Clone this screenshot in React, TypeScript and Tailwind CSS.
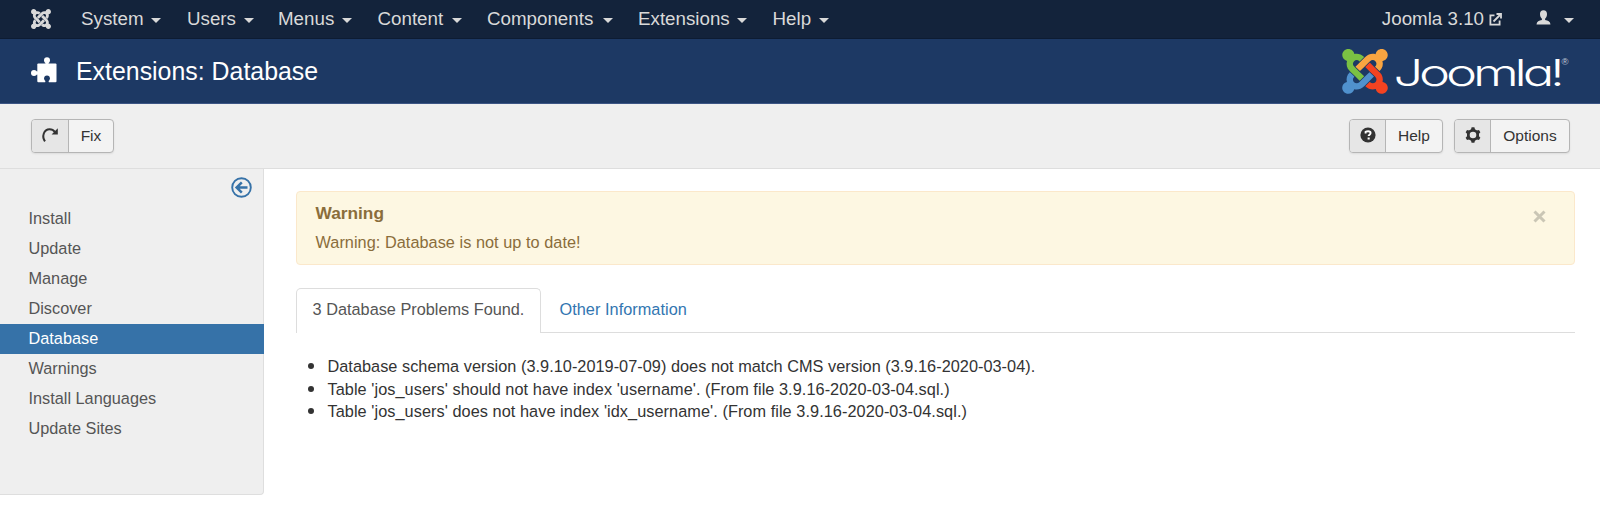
import type { ReactNode } from 'react';
import { SiJoomla } from 'react-icons/si';

const menus = [
  { label: 'System', width: 'w-[106px]', inner: 'w-[80px]' },
  { label: 'Users', width: 'w-[91px]', inner: 'w-[67px]' },
  { label: 'Menus', width: 'w-[99.5px]', inner: 'w-[74px]' },
  { label: 'Content', width: 'w-[109.5px]', inner: 'w-[84.5px]' },
  { label: 'Components', width: 'w-[151px]', inner: 'w-[126px]' },
  { label: 'Extensions', width: 'w-[134.5px]', inner: 'w-[109px]' },
  { label: 'Help', width: 'w-[80px]', inner: 'w-[56px]' },
];

const sidebar = ['Install', 'Update', 'Manage', 'Discover', 'Database', 'Warnings', 'Install Languages', 'Update Sites'];

const problems = [
  { text: 'Database schema version (3.9.10-2019-07-09) does not match CMS version (3.9.16-2020-03-04).', spacing: 'tracking-[0.03px]' },
  { text: "Table 'jos_users' should not have index 'username'. (From file 3.9.16-2020-03-04.sql.)", spacing: 'tracking-[0.06px]' },
  { text: "Table 'jos_users' does not have index 'idx_username'. (From file 3.9.16-2020-03-04.sql.)", spacing: 'tracking-[0.06px]' },
];

function Caret() {
  return (
    <svg className="mt-[2px] shrink-0" width="10" height="5" viewBox="0 0 10 5">
      <path d="M0 0h10L5 5z" fill="#d9d9d9" />
    </svg>
  );
}

function PuzzleIcon() {
  return (
    <svg width="26" height="26" viewBox="0 0 26 26" fill="#fff">
      <rect x="6.300" y="6.400" width="19.200" height="18.800" rx="1" />
      <circle cx="16" cy="3.200" r="3" />
      <path d="M14.400 4h3.200v3h-3.200z" />
      <circle cx="3" cy="16" r="3" />
      <path d="M3 14.400h4v3.200H3z" />
      <g fill="#1d3964">
        <circle cx="16" cy="21.300" r="2.900" />
        <path d="M14.700 22h2.600l.6 4h-3.800z" />
      </g>
    </svg>
  );
}

function JoomlaLogo() {
  return (
    <svg width="232" height="54" viewBox="0 0 232 54">
      <g transform="translate(4.2 5) scale(1.9 1.87)">
        <path fill="#5091cd" d="M16.719 14.759L14.22 17.26l-2.37 2.37-.462.466c-1.368 1.365-3.297 1.83-5.047 1.397-.327 1.424-1.604 2.49-3.13 2.49C1.438 23.983 0 22.547 0 20.772c0-1.518 1.055-2.789 2.469-3.123-.446-1.76.016-3.705 1.396-5.08l.179-.18 2.37 2.37-.184.181c-.769.779-.769 2.024 0 2.789.771.78 2.022.78 2.787 0l.465-.465 2.367-2.371 2.502-2.506 2.368 2.372z" />
        <path fill="#f44321" d="M17.643 21.411c-1.822.563-3.885.12-5.328-1.318l-.18-.185 2.365-2.369.18.184c.771.768 2.018.768 2.787 0 .765-.765.769-2.01-.004-2.781l-.466-.465-2.365-2.37-2.502-2.503 2.37-2.369 2.499 2.505 2.367 2.37.464.464c1.365 1.36 1.846 3.278 1.411 5.021 1.56.224 2.759 1.56 2.759 3.18 0 1.784-1.439 3.21-3.209 3.21-1.545 0-2.851-1.096-3.135-2.565l-.013-.009z" />
        <path fill="#f9a541" d="M6.975 9.461l2.508-2.505 2.37-2.369.462-.461C13.74 2.7 15.772 2.251 17.58 2.79c.212-1.561 1.555-2.775 3.179-2.775 1.772 0 3.211 1.437 3.211 3.209 0 1.631-1.216 2.978-2.79 3.186.519 1.799.068 3.816-1.35 5.234l-.182.184-2.369-2.369.184-.184c.769-.77.769-2.016 0-2.783-.766-.766-2.011-.768-2.781.003l-.462.461-2.37 2.369-2.505 2.502-2.37-2.366z" />
        <path fill="#7ac143" d="M4.322 12.108l-.461-.462C2.43 10.215 1.986 8.17 2.529 6.358 1.1 6.029.03 4.754.03 3.224.03 1.454 1.47.015 3.24.015c1.596 0 2.92 1.166 3.17 2.691 1.73-.405 3.626.065 4.979 1.415l.184.185-2.37 2.37-.183-.181c-.77-.765-2.016-.765-2.785 0-.771.781-.77 2.025-.005 2.79l.465.466 2.37 2.37 2.505 2.505-2.367 2.37-2.51-2.505-2.371-2.37v-.012z" />
      </g>
      <text
        transform="translate(55.500 41.500) scale(1.42 1)"
        fill="#fff"
        className="font-['Inter',sans-serif] text-[37px] font-light tracking-[-2.95px] [font-feature-settings:'cv11']"
      >
        Joomla!
      </text>
      <text x="223.500" y="20.500" fill="#c3cbd8" className="font-['Liberation_Sans',sans-serif] text-[9.5px]">®</text>
    </svg>
  );
}

function ToolbarButton({ icon, label, width, iconWidth }: { icon: ReactNode; label: string; width: string; iconWidth: string }) {
  return (
    <button className={`flex h-[34px] ${width} overflow-hidden rounded-[4px] border border-[#b5b5b5] bg-[#f3f3f3] text-[15.5px] text-[#333] shadow-[0_1px_2px_rgba(0,0,0,0.08)]`}>
      <span className={`flex h-full ${iconWidth} shrink-0 items-center justify-center border-r border-[#b5b5b5] bg-[#e6e6e6]`}>{icon}</span>
      <span className="flex h-full flex-1 items-center justify-center">{label}</span>
    </button>
  );
}

const teeth = [0, 60, 120, 180, 240, 300];

export default function App() {
  return (
    <div className="h-[508px] w-[1600px] overflow-hidden bg-white font-['Liberation_Sans',Arial,sans-serif] text-[16.3px] text-[#333]">
      <nav className="flex h-[39px] items-center border-b border-[#0d1c33] bg-[#13233b] pl-[31px] text-[18.75px] text-[#d9d9d9]">
        <SiJoomla size={20} className="mr-[30px] shrink-0" />
        {menus.map((m) => (
          <div key={m.label} className={`${m.width} shrink-0`}>
            <div className={`${m.inner} flex items-center justify-between leading-[24px]`}>
              <span>{m.label}</span>
              <Caret />
            </div>
          </div>
        ))}
        <div className="ml-auto flex items-center pr-[26px]">
          <span className="mr-[5px] leading-[24px]">Joomla 3.10</span>
          <svg width="13" height="13" viewBox="0 0 13 13" fill="none" stroke="#d9d9d9" strokeWidth="1.8">
            <path d="M5.500 2.400H1.400v9.200h9.200V7.500" />
            <path d="M4.500 8.500L11 2" />
            <path d="M7.500 1H12v4.500" />
          </svg>
          <svg className="mr-[13px] ml-[34px] -translate-y-[2px]" width="15" height="15" viewBox="0 0 15 15" fill="#d9d9d9">
            <path d="M7.500.3c2.300 0 3.500 1.400 3.500 3.700 0 2-.7 3.700-1.900 4.700v1.200c2.800.3 5.200 1.600 5.400 4.500H.5c.2-2.900 2.600-4.200 5.400-4.500V8.700C4.700 7.700 4 6 4 4 4 1.700 5.200.3 7.500.3z" />
          </svg>
          <Caret />
        </div>
      </nav>

      <header className="flex h-[65px] items-center border-b border-[#3c5584] bg-[#1d3964] pl-[31px] text-white">
        <div className="mr-[19px] shrink-0 -translate-y-[1px]">
          <PuzzleIcon />
        </div>
        <h1 className="text-[24.9px] leading-[32px]">Extensions: Database</h1>
        <div className="ml-auto pr-[30px]">
          <JoomlaLogo />
        </div>
      </header>

      <div className="flex h-[65px] items-center border-b border-[#dedede] bg-[#efefef] pr-[30px] pl-[31px]">
        <ToolbarButton
          label="Fix"
          width="w-[83px]"
          iconWidth="w-[37px]"
          icon={
            <svg className="-translate-y-px" width="18" height="16" viewBox="0 0 18 16">
              <path d="M4 14.300C.5 9.500 2.800 2.300 8.600 2.300c2.200 0 4 .9 5.200 2.600" fill="none" stroke="#333" strokeWidth="2" />
              <path d="M16.800 1.300v6.200h-6.200z" fill="#333" />
            </svg>
          }
        />
        <div className="ml-auto flex gap-[11px]">
          <ToolbarButton
            label="Help"
            width="w-[94px]"
            iconWidth="w-[36px]"
            icon={
              <svg className="-translate-y-px" width="16" height="16" viewBox="0 0 16 16">
                <circle cx="8" cy="8" r="7.600" fill="#333" />
                <path d="M5.600 6.400V4.800c.6-.4 1.500-.6 2.500-.6 1.600 0 2.500.7 2.500 1.900 0 1.500-2 1.700-2 3" fill="none" stroke="#fff" strokeWidth="1.900" />
                <path d="M7.600 10.400h2.100v2H7.600z" fill="#fff" />
              </svg>
            }
          />
          <ToolbarButton
            label="Options"
            width="w-[116px]"
            iconWidth="w-[36px]"
            icon={
              <svg className="-translate-y-px" width="16" height="16" viewBox="0 0 16 16">
                <circle cx="8" cy="8" r="4.700" fill="none" stroke="#333" strokeWidth="2.800" />
                {teeth.map((a) => (
                  <path key={a} d="M5.800 3.200L6.600.3h2.800l.8 2.900z" fill="#333" transform={`rotate(${a} 8 8)`} />
                ))}
              </svg>
            }
          />
        </div>
      </div>

      <div className="flex items-start">
        <aside className="h-[326px] w-[264px] shrink-0 rounded-br-[4px] border-r border-b border-[#dedede] bg-[#efefef]">
          <div className="flex h-[35px] justify-end pt-[8px] pr-[11px]">
            <svg width="21" height="21" viewBox="0 0 21 21" fill="none" stroke="#3672a8">
              <circle cx="10.500" cy="10.500" r="9.300" strokeWidth="1.900" />
              <path d="M16.500 10.500H6.500M10.800 5.300L5.600 10.500l5.200 5.200" strokeWidth="2.500" />
            </svg>
          </div>
          <ul>
            {sidebar.map((s) => (
              <li
                key={s}
                className={
                  s === 'Database'
                    ? '-mr-px h-[30px] bg-[#3672a8] pl-[28.5px] leading-[29px] text-white'
                    : 'h-[30px] pl-[28.5px] leading-[29px] text-[#555]'
                }
              >
                {s}
              </li>
            ))}
          </ul>
        </aside>

        <main className="flex-1 pt-[22px] pr-[25px] pl-[32px]">
          <div className="flex h-[74px] justify-between rounded-[4px] border border-[#fbe8cb] bg-[#fdf7e2] pt-[8px] pr-[28px] pl-[18.5px] text-[#8a6d3b]">
            <div>
              <h4 className="text-[17.3px] leading-[26px] font-bold">Warning</h4>
              <p className="mt-[5px] leading-[22px] tracking-[0.04px]">Warning: Database is not up to date!</p>
            </div>
            <svg className="mt-[10px]" width="13" height="13" viewBox="0 0 13 13">
              <path d="M1.500 1.500l10 10M11.500 1.500l-10 10" stroke="#cac6b5" strokeWidth="3" />
            </svg>
          </div>

          <div className="mt-[23px] flex h-[45px] border-b border-[#ddd]">
            <div className="flex h-[45px] w-[245px] items-center justify-center rounded-t-[5px] border border-b-0 border-[#ddd] bg-white pb-[3px] text-[#555]">3 Database Problems Found.</div>
            <div className="flex h-[45px] items-center pb-[2px] pl-[18.5px] tracking-[0.04px] text-[#3276b1]">Other Information</div>
          </div>

          <ul className="mt-[22px] pl-[12px]">
            {problems.map((p) => (
              <li key={p.text} className="flex h-[22.4px] items-center">
                <span className="mr-[13.5px] h-[6px] w-[6px] rounded-full bg-[#333]" />
                <span className={`${p.spacing} leading-[22px] whitespace-nowrap`}>{p.text}</span>
              </li>
            ))}
          </ul>
        </main>
      </div>
    </div>
  );
}
